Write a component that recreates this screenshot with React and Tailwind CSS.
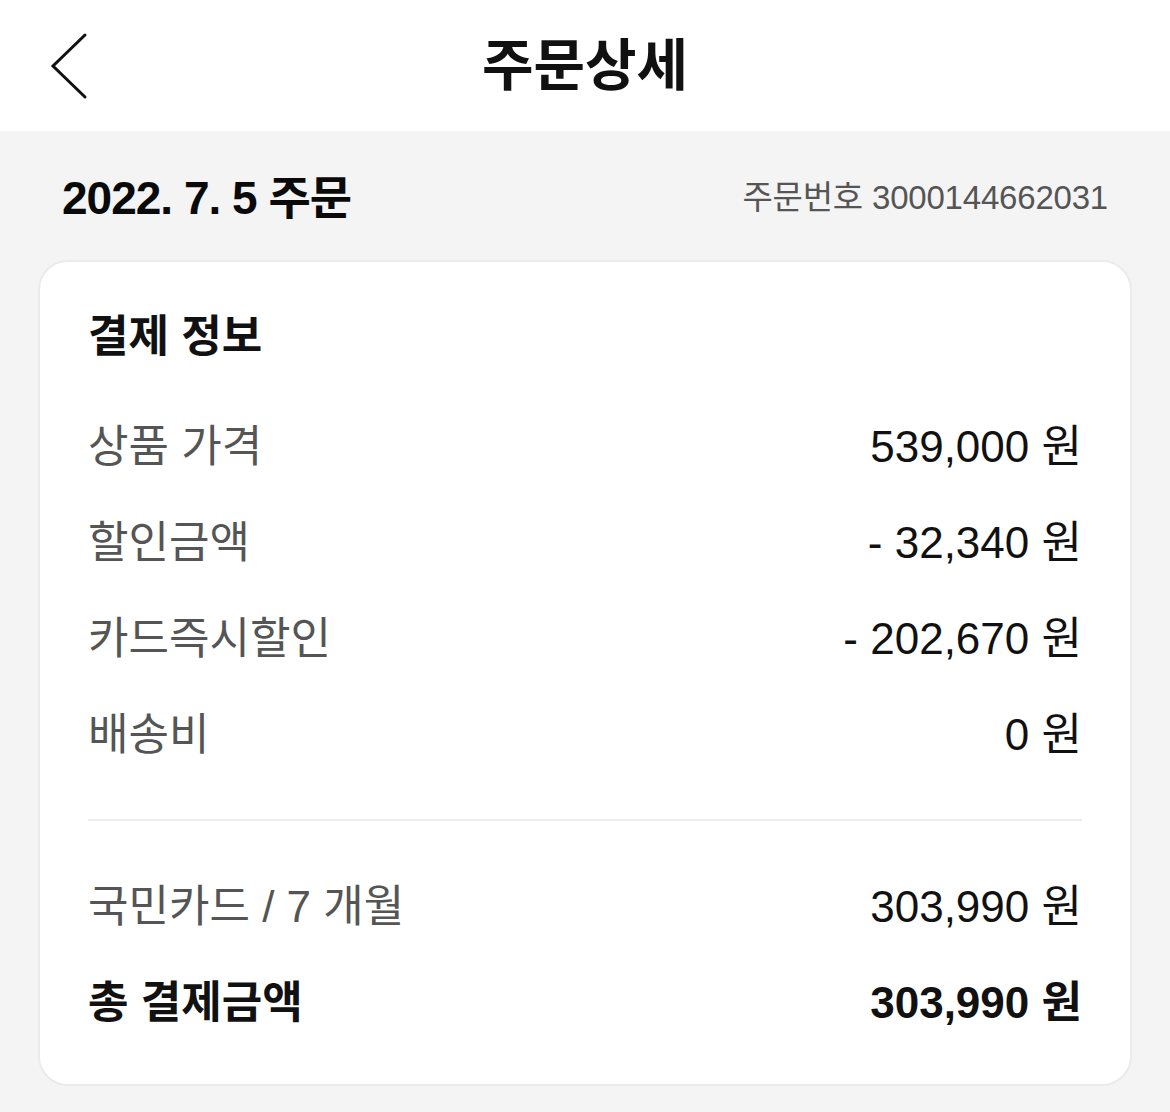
export default function App() {
  const font = { fontFamily: '"Liberation Sans", "Noto Sans CJK KR", sans-serif' };
  const rows = [
    ["상품 가격", "539,000 원"],
    ["할인금액", "- 32,340 원"],
    ["카드즉시할인", "- 202,670 원"],
    ["배송비", "0 원"],
  ];
  return (
    <div className="w-[1170px] h-[1112px] bg-[#f4f4f4]" style={font}>
      <header className="relative h-[131px] bg-white flex items-center justify-center">
        <svg className="absolute left-[50px] top-[32px]" width="40" height="68" viewBox="0 0 40 68">
          <polyline points="35,3 3,34 35,65" fill="none" stroke="#111" strokeWidth="3" strokeLinecap="round" strokeLinejoin="miter" />
        </svg>
        <h1 className="text-[56px] font-bold text-[#111] leading-none">주문상세</h1>
      </header>
      <div className="h-[129px] pt-[4px] px-[62px] flex items-center justify-between">
        <div className="text-[46px] font-bold text-[#0a0a0a] tracking-[-1px] leading-none">2022. 7. 5 주문</div>
        <div className="text-[33px] text-[#555] tracking-[-0.2px] leading-none">주문번호 3000144662031</div>
      </div>
      <div className="mx-[38px] bg-white border-2 border-[#ebebeb] rounded-[30px] pt-[45px] pb-[33px] px-[48px]">
        <div className="h-[60px] flex items-center text-[44px] font-bold text-[#111] leading-none">결제 정보</div>
        <div className="mt-[32px]">
          {rows.map(([l, v]) => (
            <div key={l} className="h-[96px] flex items-center justify-between leading-none">
              <span className="text-[44px] text-[#555]">{l}</span>
              <span className="text-[44px] text-[#111]">{v}</span>
            </div>
          ))}
        </div>
        <div className="mt-[36px] h-[2px] bg-[#ececec]" />
        <div className="mt-[38px]">
          <div className="h-[96px] flex items-center justify-between leading-none">
            <span className="text-[44px] text-[#555]">국민카드 / 7 개월</span>
            <span className="text-[44px] text-[#111]">303,990 원</span>
          </div>
          <div className="h-[96px] flex items-center justify-between leading-none">
            <span className="text-[44px] font-bold text-[#111]">총 결제금액</span>
            <span className="text-[44px] font-bold text-[#111]">303,990 원</span>
          </div>
        </div>
      </div>
    </div>
  );
}
